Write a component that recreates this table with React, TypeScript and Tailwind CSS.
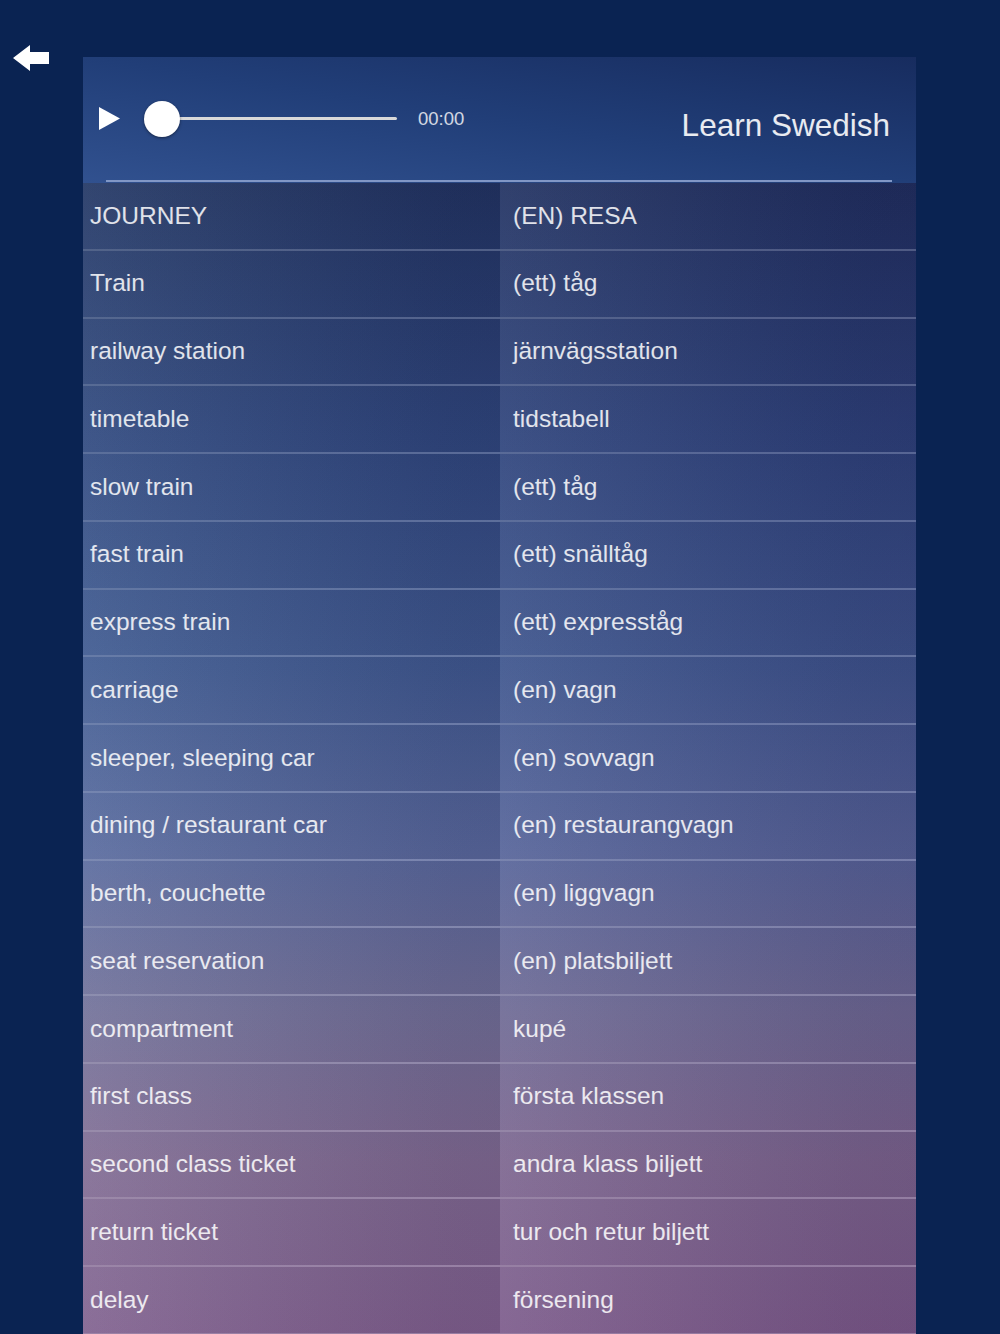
type Entry = {
  en: string
  sv: string
}

const entries: Entry[] = [
  { en: 'JOURNEY', sv: '(EN) RESA' },
  { en: 'Train', sv: '(ett) tåg' },
  { en: 'railway station', sv: 'järnvägsstation' },
  { en: 'timetable', sv: 'tidstabell' },
  { en: 'slow train', sv: '(ett) tåg' },
  { en: 'fast train', sv: '(ett) snälltåg' },
  { en: 'express train', sv: '(ett) expresståg' },
  { en: 'carriage', sv: '(en) vagn' },
  { en: 'sleeper, sleeping car', sv: '(en) sovvagn' },
  { en: 'dining / restaurant car', sv: '(en) restaurangvagn' },
  { en: 'berth, couchette', sv: '(en) liggvagn' },
  { en: 'seat reservation', sv: '(en) platsbiljett' },
  { en: 'compartment', sv: 'kupé' },
  { en: 'first class', sv: 'första klassen' },
  { en: 'second class ticket', sv: 'andra klass biljett' },
  { en: 'return ticket', sv: 'tur och retur biljett' },
  { en: 'delay', sv: 'försening' },
]

const BackArrow = () => (
  <svg width="36" height="26" viewBox="0 0 36 26" className="block">
    <path d="M0 13 L17 0 L17 7 L36 7 L36 19 L17 19 L17 26 Z" fill="#ffffff" />
  </svg>
)

const PlayerHeader = () => (
  <div className="flex h-[126px] flex-col bg-[linear-gradient(to_top_right,#31518f,#213e78_50%,#172c5f)]">
    <div className="flex h-[123px] items-center pl-[16px] pr-[26px]">
      <svg width="21" height="23" viewBox="0 0 21 23" className="block shrink-0">
        <path d="M0 0 L21 11.5 L0 23 Z" fill="#ffffff" />
      </svg>
      {/* progress slider */}
      <div className="relative ml-[24px] h-[36px] w-[253px]">
        <div className="absolute left-[18px] right-0 top-[16.5px] h-[3px] rounded-full bg-[#d9d9d9]" />
        <div className="absolute left-0 top-0 h-[36px] w-[36px] rounded-full bg-white shadow-[0_1px_3px_rgba(0,0,0,0.45)]" />
      </div>
      <span className="ml-[21px] text-[18.5px] text-white/80">00:00</span>
      <span className="ml-auto pt-[14px] text-[31.5px] text-white/90">Learn Swedish</span>
    </div>
    <div className="ml-[23px] mr-[24px] h-[2px] bg-[#8197c6]" />
  </div>
)

const Row = ({ entry }: { entry: Entry }) => (
  <div className="flex h-[67.75px] border-b-2 border-white/20">
    <div className="flex w-[417px] items-center bg-gradient-to-r from-white/[0.07] to-black/[0.08] pl-[7px]">
      {entry.en}
    </div>
    <div className="flex flex-1 items-center bg-gradient-to-r from-white/[0.07] to-black/[0.08] pl-[13px]">
      {entry.sv}
    </div>
  </div>
)

export default function App() {
  return (
    <div className="flex min-h-[1334px] bg-[#0a2352] font-['Liberation_Sans',Arial,sans-serif]">
      <div className="w-[83px] shrink-0 pl-[13px] pt-[45px]">
        <BackArrow />
      </div>
      <div className="w-[833px] shrink-0 pt-[57px]">
        <PlayerHeader />
        <div className="bg-[linear-gradient(180deg,#1c3160_0%,#2a447c_22%,#3b578f_42%,#55679c_58%,#6f6e97_72%,#7e6991_85%,#7e5e8d_100%)]">
          <div className="bg-[linear-gradient(to_right,rgba(255,255,255,0.03),rgba(70,10,90,0.10))] text-[24.5px] text-white/85">
            {entries.map((entry, i) => (
              <Row key={i} entry={entry} />
            ))}
          </div>
        </div>
      </div>
    </div>
  )
}
